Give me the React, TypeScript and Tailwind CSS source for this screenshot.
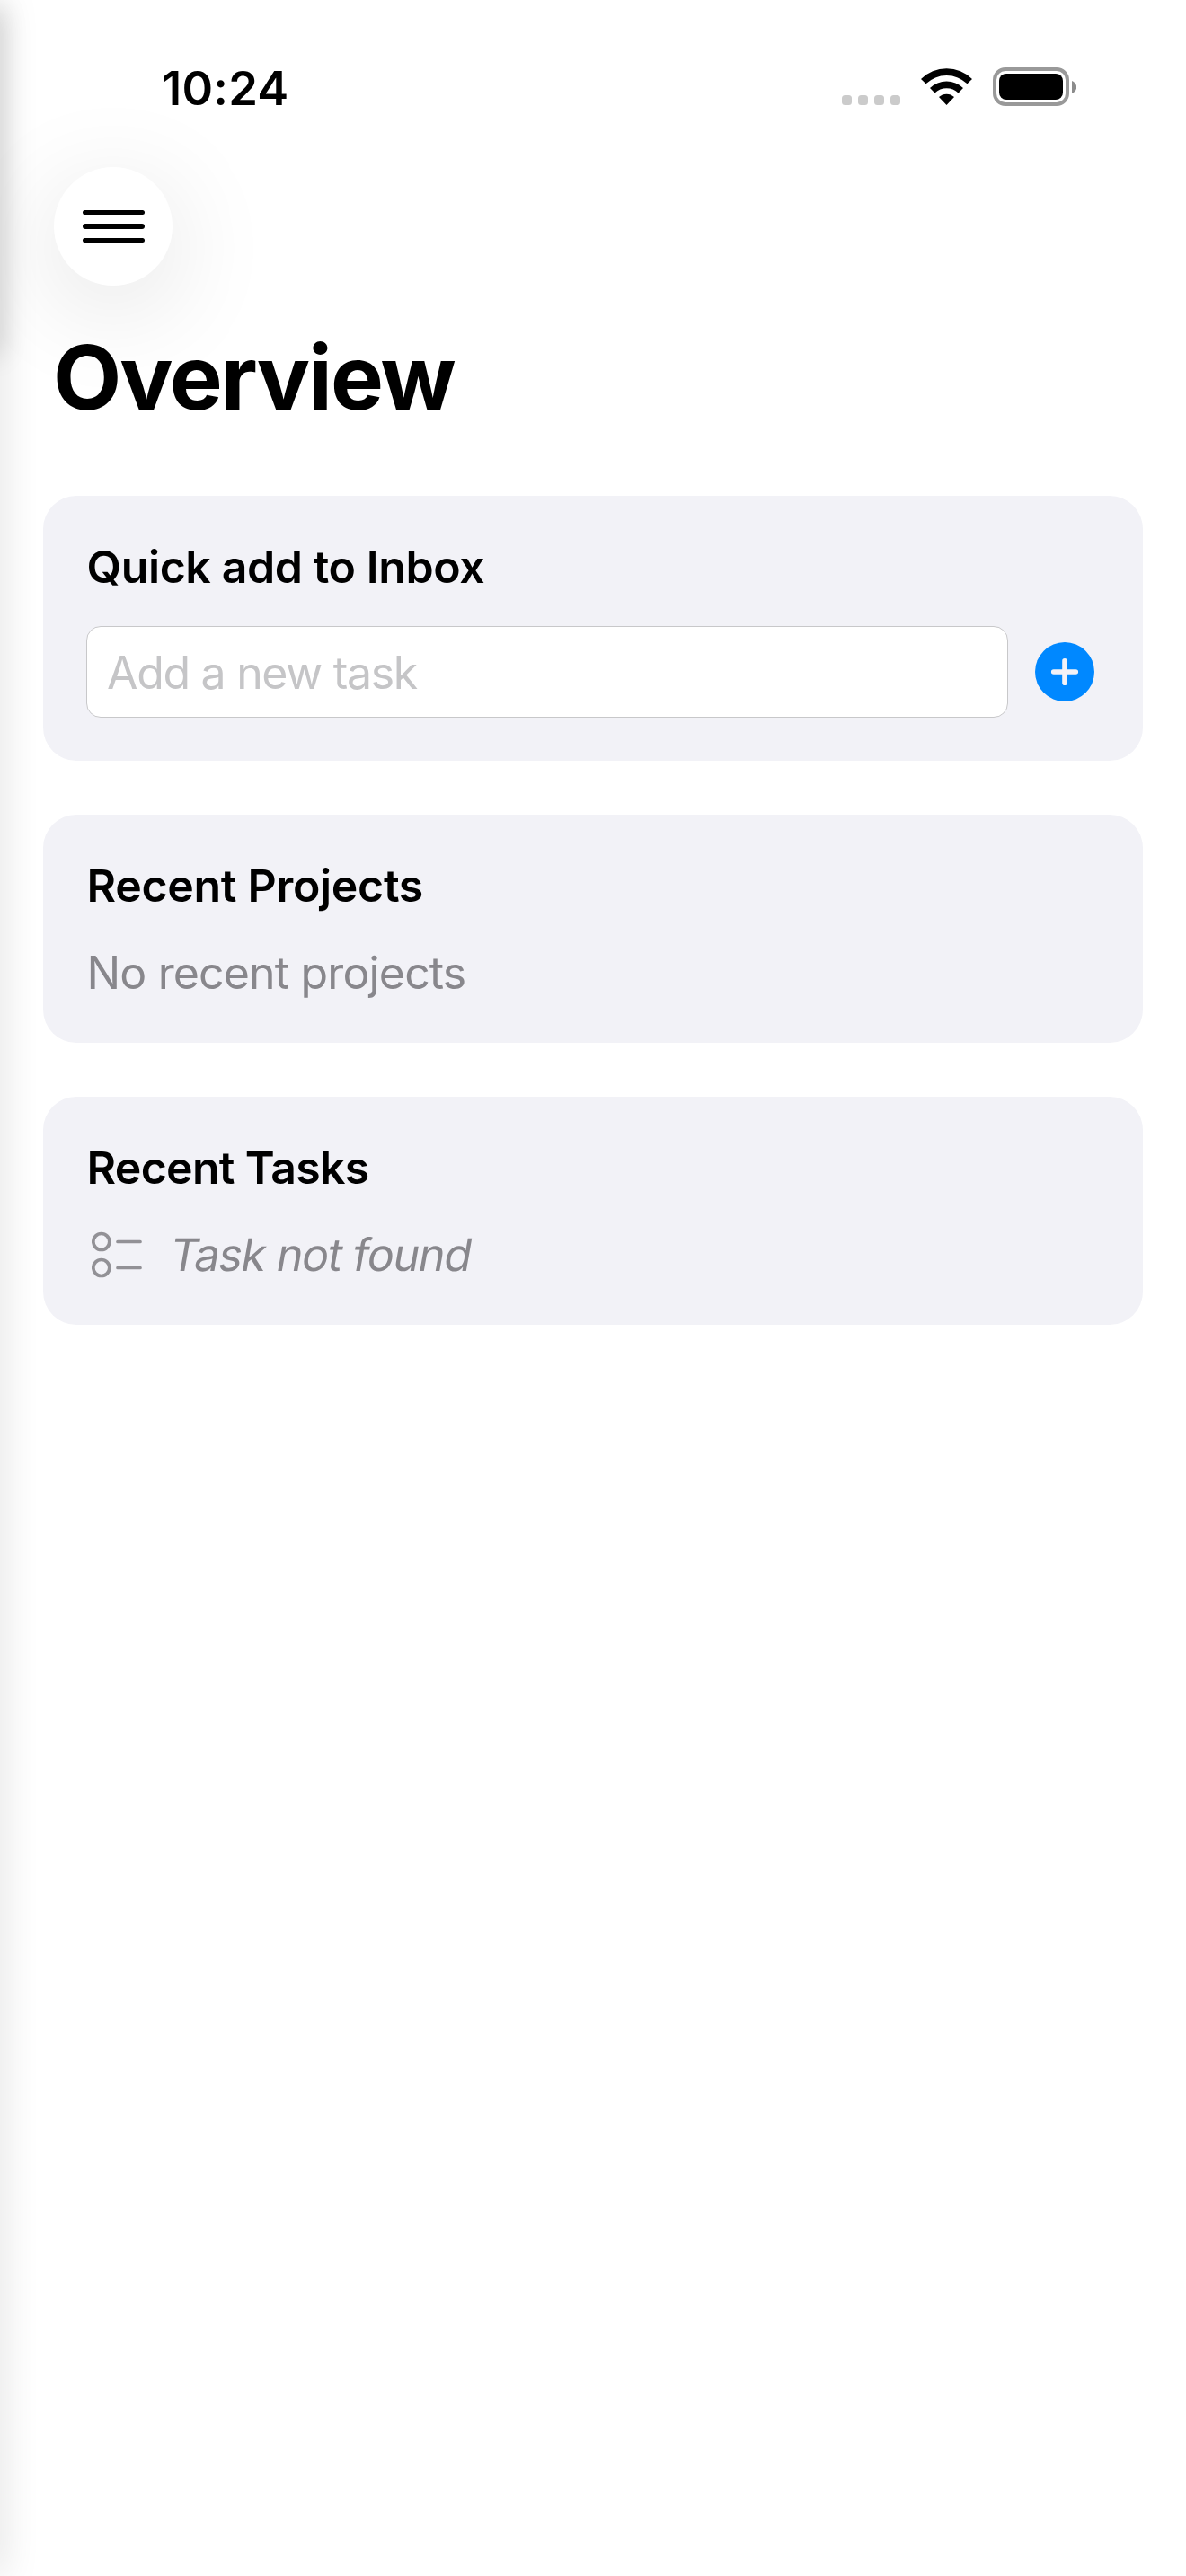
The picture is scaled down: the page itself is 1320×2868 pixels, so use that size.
import React from "react";

function StatusBar() {
  return (
    <header className="flex h-[186px] items-start justify-between pl-[180px] pr-[122px]">
      <time className="mt-[66px] text-[52.5px] font-semibold leading-[64px] tracking-[0.2px]">10:24</time>
      <div className="mt-[75px] flex h-[43px] items-start">
        <div className="mt-[31px] flex gap-[7px]">
          {[0, 1, 2, 3].map((i) => (
            <span key={i} className="size-[11px] rounded-[3.5px] bg-[#cbcbcb]" />
          ))}
        </div>
        <svg className="ml-[23px] h-[42px] w-[57px]" viewBox="0 0 57 42">
          <path d="M0 13 A40.5 40.5 0 0 1 57 13 L51.5 18.3 A33 33 0 0 0 5.5 18.3 Z" />
          <path d="M10 23 A26.5 26.5 0 0 1 47 23 L41.6 28.4 A19 19 0 0 0 15.4 28.4 Z" />
          <path d="M20 33 A12.5 12.5 0 0 1 37 33 L28.5 42 Z" />
        </svg>
        <div className="ml-[23px] flex h-[43px] w-[85px] rounded-[14px] border-4 border-[#999] p-[3px]">
          <div className="flex-1 rounded-[8px] bg-black" />
        </div>
        <svg className="ml-[3px] mt-[14.5px] h-[14px] w-[5px]" viewBox="0 0 5 14">
          <path d="M0 0 C7 3 7 11 0 14 Z" fill="#8c8c8c" />
        </svg>
      </div>
    </header>
  );
}

function Card({
  title,
  className,
  titleClassName,
  children,
}: {
  title: string;
  className: string;
  titleClassName: string;
  children: React.ReactNode;
}) {
  return (
    <section className={`rounded-[37px] bg-[#f2f2f7] px-12 pt-[49px] ${className}`}>
      <h2 className={`text-[50px] font-semibold leading-[60px] ${titleClassName}`}>{title}</h2>
      {children}
    </section>
  );
}

export default function App() {
  return (
    <div className="relative h-[2868px] w-[1320px] overflow-hidden bg-white font-['Inter',sans-serif] text-black">
      <StatusBar />
      <button className="ml-[60px] flex size-[132px] flex-col items-center justify-center gap-[10px] rounded-full bg-white shadow-[0_24px_120px_rgba(0,0,0,0.12)]">
        <span className="h-[5.5px] w-[69px] rounded-full bg-black" />
        <span className="h-[5.5px] w-[69px] rounded-full bg-black" />
        <span className="h-[5.5px] w-[69px] rounded-full bg-black" />
      </button>
      <h1 className="ml-[59px] mt-[42px] text-[99px] font-bold leading-[120px] tracking-[-2px]">Overview</h1>
      <main className="mx-12 mt-[72px] flex flex-col gap-[60px]">
        <Card title="Quick add to Inbox" className="h-[295px]" titleClassName="ml-[0.5px] tracking-[-0.4px]">
          <div className="mt-9 flex items-center">
            <div className="flex h-[102px] w-[1026px] items-center rounded-[16px] border border-[#c8c8ca] bg-white pl-[22px] pt-[2px] text-[50px] tracking-[-1.3px] text-[#c5c5c7]">
              Add a new task
            </div>
            <button className="ml-[30px]">
              <svg className="block size-[66px]" viewBox="0 0 66 66">
                <circle cx="33" cy="33" r="33" fill="#0088ff" />
                <path d="M33 20.7V45.3M20.7 33H45.3" stroke="#f2f2f7" strokeWidth="5.6" strokeLinecap="round" />
              </svg>
            </button>
          </div>
        </Card>
        <Card title="Recent Projects" className="h-[254px]" titleClassName="ml-[0.5px] tracking-[-0.3px]">
          <p className="ml-[0.5px] mt-[37px] text-[50px] leading-[60px] tracking-[-0.85px] text-[#88878c]">No recent projects</p>
        </Card>
        <Card title="Recent Tasks" className="h-[254px]" titleClassName="ml-[0.5px] tracking-[-0.7px]">
          <div className="mt-[37px] flex items-center text-[#88878c]">
            <svg className="ml-[6px] h-[52px] w-[56px]" viewBox="0 0 56 52" fill="none" stroke="#929196" strokeWidth="3.7" strokeLinecap="round">
              <circle cx="10.8" cy="11.5" r="9" />
              <circle cx="10.8" cy="40.5" r="9" />
              <path d="M29 11.5H54M29 40.5H54" />
            </svg>
            <span className="ml-[32px] inline-block -skew-x-10 text-[50px] leading-[60px] tracking-[-1.2px]">Task not found</span>
          </div>
        </Card>
      </main>
      <div className="pointer-events-none absolute left-[-20px] top-0 h-full w-5 shadow-[0_0_42px_rgba(0,0,0,0.17)]" />
      <div className="pointer-events-none absolute left-[-20px] top-[10px] h-[385px] w-5 shadow-[0_0_30px_rgba(0,0,0,0.18)]" />
    </div>
  );
}
